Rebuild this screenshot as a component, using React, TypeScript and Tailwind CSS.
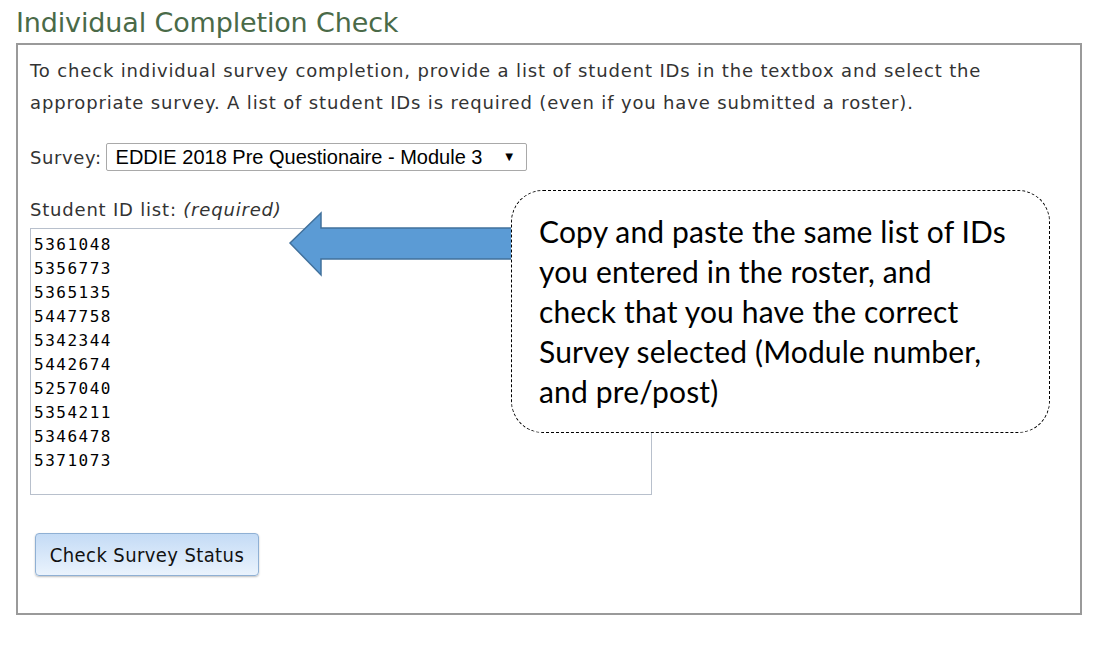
import React from "react";

const ids = [
  "5361048",
  "5356773",
  "5365135",
  "5447758",
  "5342344",
  "5442674",
  "5257040",
  "5354211",
  "5346478",
  "5371073",
];

function Arrow() {
  return (
    <svg
      className="absolute left-[288px] top-[210px]"
      width="230"
      height="68"
      viewBox="288 210 230 68"
    >
      <polygon
        points="290,243 321,213 321,228 514,228 514,259 321,259 321,275"
        fill="#5b9bd5"
        stroke="#41719c"
        strokeWidth="1.5"
        strokeLinejoin="miter"
      />
    </svg>
  );
}

function Callout() {
  return (
    <div className="absolute left-[511px] top-[190px] w-[539px] h-[243px] rounded-[32px] border-[1.5px] border-dashed border-black bg-white pl-[27px] pt-[20px] font-['Lato','Noto_Sans',sans-serif] text-[30px] leading-[40px] tracking-[0.15px] text-black">
      Copy and paste the same list of IDs
      <br />
      you entered in the roster, and
      <br />
      check that you have the correct
      <br />
      Survey selected (Module number,
      <br />
      and pre/post)
    </div>
  );
}

export default function App() {
  return (
    <div className="relative w-[1110px] h-[645px] bg-white font-['DejaVu_Sans',sans-serif] text-[#333]">
      <h2 className="pl-[16px] pt-[6px] h-[43px] text-[27px] leading-[34px] tracking-[-0.15px] text-[#4a6a48]">
        Individual Completion Check
      </h2>
      <div className="ml-[16px] w-[1066px] h-[572px] border-2 border-[#9a9a9a] pl-[12px] pt-[10px]">
        <p className="text-[18px] leading-[32px] tracking-[0.85px]">
          To check individual survey completion, provide a list of student IDs in the textbox and select the
          <br />
          appropriate survey. A list of student IDs is required (even if you have submitted a roster).
        </p>
        <div className="mt-[24px] flex items-center gap-[4px] text-[18px] tracking-[0.6px]">
          <span>Survey:</span>
          <div className="flex items-center justify-between w-[421px] h-[28px] border border-[#a9a9a9] rounded-[2px] pl-[9px] pr-[10px] font-['Liberation_Sans',sans-serif] text-[20px] tracking-normal text-black">
            <span>EDDIE 2018 Pre Questionaire - Module 3</span>
            <span className="text-[13px]">▼</span>
          </div>
        </div>
        <div className="mt-[28px] text-[18px] leading-[22px] tracking-[0.8px]">
          Student ID list: <i>(required)</i>
        </div>
        <div className="mt-[7px] w-[622px] h-[267px] border border-[#b8c0cc] pl-[3px] pt-[4px] font-['DejaVu_Sans_Mono',monospace] text-[16px] leading-[24px] tracking-[1.5px] text-black">
          {ids.map((id) => (
            <div key={id}>{id}</div>
          ))}
        </div>
        <button className="mt-[38px] ml-[5px] w-[224px] h-[43px] rounded-[4px] border border-[#8fb0d4] bg-gradient-to-b from-[#c4dbf5] to-[#eaf3fd] shadow-[0_1px_2px_rgba(0,0,0,0.25)] text-[20px] tracking-[0.4px] text-[#111] font-['DejaVu_Sans_Condensed','DejaVu_Sans',sans-serif]">
          Check Survey Status
        </button>
      </div>
      <Arrow />
      <Callout />
    </div>
  );
}
